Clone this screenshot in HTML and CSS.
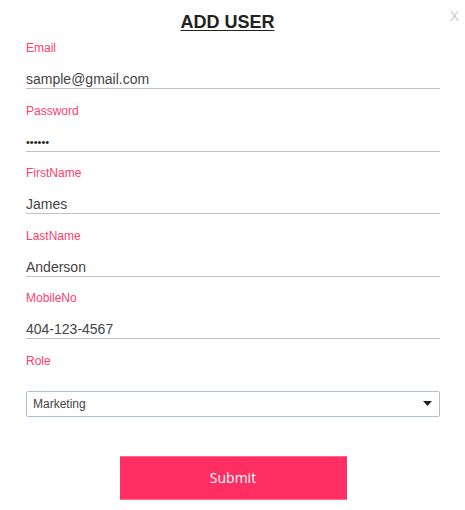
FILE: index.html
```html
<!DOCTYPE html>
<html>
<head>
<meta charset="utf-8">
<link rel="stylesheet" href="styles.css">
</head>
<body>
<div class="modal">
  <span class="close">X</span>
  <h1 class="title">ADD USER</h1>
  <form class="form">
    <div class="field">
      <label class="label">Email</label>
      <div class="input">sample@gmail.com</div>
    </div>
    <div class="field">
      <label class="label">Password</label>
      <div class="input dots">&bull;&bull;&bull;&bull;&bull;&bull;</div>
    </div>
    <div class="field">
      <label class="label">FirstName</label>
      <div class="input">James</div>
    </div>
    <div class="field">
      <label class="label">LastName</label>
      <div class="input">Anderson</div>
    </div>
    <div class="field">
      <label class="label">MobileNo</label>
      <div class="input">404-123-4567</div>
    </div>
    <div class="field role">
      <label class="label">Role</label>
      <div class="select">
        <span>Marketing</span>
        <svg class="caret" width="9" height="5" viewBox="0 0 9 5"><path d="M0 0 H9 L4.5 5 Z" fill="#222"/></svg>
      </div>
    </div>
    <div class="actions">
      <button type="button" class="submit">Submit</button>
    </div>
  </form>
</div>
</body>
</html>
```
FILE: styles.css
```css
html, body {
  margin: 0;
  padding: 0;
  background: #fff;
}
body {
  font-family: "Liberation Sans", Arial, sans-serif;
  width: 465px;
  height: 510px;
  overflow: hidden;
}
.modal {
  position: relative;
  padding: 0 25px 0 26px;
}
.close {
  position: absolute;
  top: 8px;
  right: 6px;
  font-size: 14px;
  color: #cfcfcf;
  line-height: 16px;
}
.title {
  margin: 0;
  padding: 12px 11px 0 0;
  height: 29px;
  text-align: center;
  font-size: 18px;
  line-height: 21px;
  font-weight: bold;
  color: #222;
  text-decoration: underline;
  text-underline-offset: 2px;
}
.form {
  display: flex;
  flex-direction: column;
}
.field {
  display: flex;
  flex-direction: column;
  margin-bottom: 14.5px;
}
.label {
  font-size: 12px;
  line-height: 14px;
  color: #ff3d6e;
}
.input {
  margin-top: 16px;
  font-size: 14px;
  line-height: 16px;
  color: #444;
  padding-bottom: 1px;
  border-bottom: 1px solid #c2c2c2;
}
.input.dots {
  font-size: 11px;
  color: #222;
}
.role {
  margin-bottom: 0;
}
.role .select {
  margin-top: 23px;
  height: 24px;
  border: 1px solid #a9bfe6;
  border-radius: 2px;
  display: flex;
  align-items: center;
  justify-content: space-between;
  padding: 0 7px 0 6px;
  font-size: 12px;
  color: #444;
}
.actions {
  display: flex;
  justify-content: center;
  margin-top: 39px;
}
.submit {
  width: 227px;
  height: 44px;
  border: none;
  border-top: 1px solid #ff6b8e;
  border-bottom: 1px solid #ff6b8e;
  background: #ff2e63;
  color: #fff;
  font-family: "Open Sans", sans-serif;
  font-size: 14px;
  padding: 0;
}
```
